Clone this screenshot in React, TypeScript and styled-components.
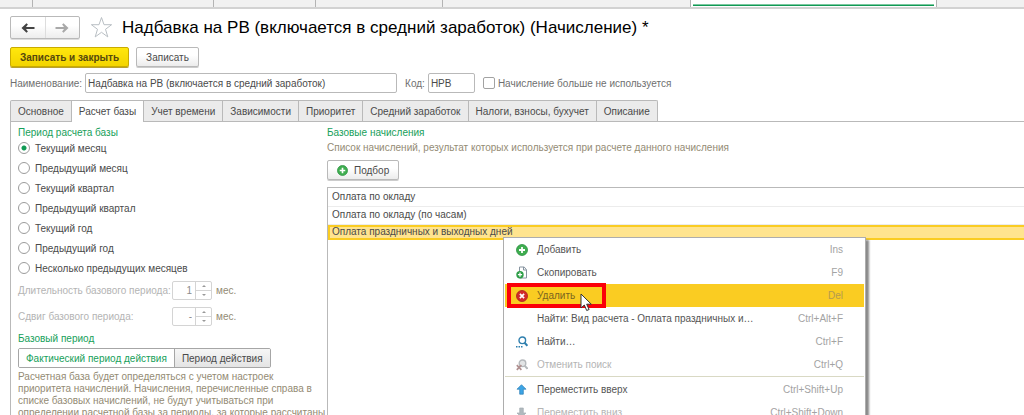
import React, { useState } from "react";
import styled, { createGlobalStyle, css } from "styled-components";

const color = {
  text: "#4a4a4a",
  muted: "#6f6f6f",
  hint: "#948b74",
  disabled: "#b4b4b4",
  green: "#16a05a",
  line: "#b9b9b9",
  yellow: "#facc22",
};

const GlobalStyle = createGlobalStyle`
  * { box-sizing: border-box; }
  body { margin: 0; background: #fff; overflow: hidden; }
  body, button, input { font-family: "Liberation Sans", Arial, sans-serif; font-size: 10px; color: ${color.text}; }
  button, input { margin: 0; }
`;

const Page = styled.div`
  display: flex;
  flex-direction: column;
  height: 100vh;
  overflow: hidden;
`;

const WindowTabs = styled.nav`
  display: flex;
  flex: none;
  height: 9px;
  background: #f1f1f1;
  border-bottom: 2px solid #d2d2d2;
`;

const WindowTab = styled.div<{ $grow: number; $active?: boolean }>`
  flex: ${(p) => p.$grow} 1 0;
  min-width: 0;
  border-right: 1px solid #b4b4b4;
  &:last-child { border-right: 0; }
  ${(p) => p.$active && "background: #fff;"}
`;

const ActiveMark = styled.div`
  height: 2px;
  margin: 4px 2px 0;
  border-top: 1px solid #7cc8a0;
  background: #109a54;
`;

const Form = styled.main`
  display: flex;
  flex: 1;
  flex-direction: column;
  min-height: 0;
  padding: 7px 0 0 10px;
`;

const TitleRow = styled.header`
  display: flex;
  align-items: center;
  height: 23px;
`;

const History = styled.div`
  display: flex;
  width: 70px;
  height: 23px;
  border: 1px solid ${color.line};
  border-radius: 2px;
  background: linear-gradient(#fff 40%, #ededed);
  box-shadow: 0 1px 0 #ddd;
`;

const HistoryButton = styled.button`
  display: grid;
  flex: 1;
  place-items: center;
  padding: 0;
  border: 0;
  background: none;
  & + & { border-left: 1px solid #ddd; }
`;

const StarButton = styled.button`
  display: grid;
  margin: 0 9px 0 10px;
  padding: 0;
  border: 0;
  background: none;
`;

const Title = styled.h1`
  margin: 0;
  color: #000;
  font-size: 17px;
  font-weight: normal;
  line-height: 22px;
  white-space: nowrap;
`;

const Commands = styled.div`
  display: flex;
  gap: 7px;
  margin-top: 8px;
`;

const Button = styled.button<{ $primary?: boolean }>`
  display: inline-flex;
  align-items: center;
  gap: 6px;
  height: 20px;
  padding: 0 9px;
  border: 1px solid ${color.line};
  border-radius: 2px;
  background: linear-gradient(#fff 40%, #ececec);
  box-shadow: 0 1px 0 #ccc;
  white-space: nowrap;
  ${(p) =>
    p.$primary &&
    css`
      border-color: #c9ab00;
      background: linear-gradient(#ffe70d, #f3d400);
      box-shadow: 0 1px 0 #b8a030;
      color: #55480d;
      font-weight: bold;
    `}
`;

const Fields = styled.div`
  display: flex;
  align-items: center;
  gap: 8px;
  margin-top: 6px;
  color: ${color.muted};
`;

const Field = styled.label`
  display: flex;
  align-items: center;
  gap: 3px;
  white-space: nowrap;
`;

const TextInput = styled.input<{ $width: number }>`
  width: ${(p) => p.$width}px;
  height: 20px;
  padding: 0 2px;
  border: 1px solid ${color.line};
  border-radius: 2px;
  background: #fff;
`;

const Checkbox = styled.input`
  width: 12px;
  height: 12px;
  border: 1px solid #a2a2a2;
  border-radius: 2px;
  background: #fff;
  appearance: none;
`;

const Tabs = styled.div`
  display: flex;
  flex: none;
  margin-top: 7px;
  border-bottom: 1px solid ${color.line};
`;

const Tab = styled.button<{ $active: boolean }>`
  height: 21px;
  padding: 0 7px;
  border: solid ${color.line};
  border-width: 1px 1px 0 0;
  background: #ebebeb;
  white-space: nowrap;
  &:first-child { border-left-width: 1px; border-top-left-radius: 2px; }
  &:last-child { border-top-right-radius: 2px; }
  ${(p) =>
    p.$active &&
    css`
      margin-bottom: -1px;
      height: 22px;
      background: #fff;
    `}
`;

const Panel = styled.section`
  display: flex;
  flex: 1;
  min-height: 0;
  padding: 5px 0 0 7px;
  border-left: 1px solid ${color.line};
`;

const Settings = styled.div`
  flex: none;
  width: 309px;
`;

const GroupTitle = styled.h2`
  margin: 0;
  color: ${color.green};
  font-size: 10px;
  font-weight: normal;
  line-height: 12px;
`;

const Periods = styled.div`
  margin-top: -1px;
`;

const RadioRow = styled.label`
  display: flex;
  align-items: center;
  gap: 5px;
  height: 20px;
`;

const Radio = styled.input`
  width: 12px;
  height: 12px;
  border: 1px solid #9c9c9c;
  border-radius: 50%;
  background: #fff;
  appearance: none;
  &:checked { background: radial-gradient(circle, #109a54 2px, #fff 3px); }
`;

const NumberRow = styled.div`
  display: flex;
  align-items: center;
  height: 26px;
  color: ${color.disabled};
`;

const NumberLabel = styled.label`
  width: 154px;
  white-space: nowrap;
`;

const Numbers = styled.div`
  margin-top: -1px;
`;

const Spinner = styled.div`
  display: flex;
  width: 40px;
  height: 19px;
  border: 1px solid #d4d4d4;
  border-radius: 2px;
`;

const NumberInput = styled.input`
  flex: 1;
  width: 0;
  padding: 0 3px;
  border: 0;
  background: none;
  color: #8c8c8c;
  text-align: right;
`;

const Steps = styled.div`
  display: flex;
  flex-direction: column;
  width: 16px;
  border-left: 1px solid #d4d4d4;
`;

const Step = styled.button`
  display: grid;
  flex: 1;
  place-items: center;
  padding: 0;
  border: 0;
  background: none;
  & + & { border-top: 1px solid #d4d4d4; }
`;

const Unit = styled.span`
  margin-left: 4px;
  color: ${color.hint};
`;

const BasePeriod = styled.div`
  margin-top: 4px;
`;

const Segments = styled.div`
  display: flex;
  width: fit-content;
  height: 20px;
  margin-top: 3px;
  border: 1px solid #a6a6a6;
  border-radius: 2px;
  overflow: hidden;
`;

const Segment = styled.button<{ $active: boolean }>`
  padding: 0 7px;
  border: 0;
  background: ${(p) => (p.$active ? "#fff" : "linear-gradient(#f6f6f6, #e4e4e4)")};
  color: ${(p) => (p.$active ? color.green : color.text)};
  white-space: nowrap;
  & + & { border-left: 1px solid #a6a6a6; }
`;

const Note = styled.p`
  margin: 3px -1px 0 0;
  color: ${color.hint};
  line-height: 12px;
`;

const Accruals = styled.div`
  display: flex;
  flex: 1;
  flex-direction: column;
  align-items: flex-start;
  min-width: 0;
`;

const Hint = styled.p`
  margin: 3px 0 6px;
  color: ${color.hint};
  line-height: 12px;
  white-space: nowrap;
`;

const ListArea = styled.div`
  position: relative;
  flex: 1;
  align-self: stretch;
  margin-top: 7px;
  border: solid ${color.line};
  border-width: 1px 0 0 1px;
`;

const List = styled.table`
  width: 100%;
  border-collapse: collapse;
`;

const Cell = styled.td<{ $selected: boolean }>`
  height: 18px;
  padding: 0 4px;
  border-bottom: 1px solid #ececec;
  line-height: 12px;
  ${(p) =>
    p.$selected &&
    css`
      height: 16px;
      border-bottom: 0;
      background: #ffe48f;
      box-shadow: inset 0 2px ${color.yellow}, inset 2px 0 ${color.yellow}, inset 0 -2px ${color.yellow};
    `}
`;

const Menu = styled.div`
  position: absolute;
  top: 49px;
  left: 175px;
  width: 363px;
  border: 1px solid #adadad;
  background: #fff;
  box-shadow: 3px 3px 2px #8a8a8a;
`;

const MenuItem = styled.button<{ $state?: "active" | "off" }>`
  display: grid;
  grid-template-columns: 18px 1fr auto;
  align-items: center;
  gap: 3px;
  width: 100%;
  height: 23px;
  padding: 0 21px 0 11px;
  border: 1px solid #fff;
  border-width: 0 1px;
  background: ${(p) => (p.$state === "active" ? color.yellow : "none")};
  color: ${(p) => (p.$state === "off" ? color.disabled : p.$state === "active" ? "#7a6420" : "#555")};
  text-align: left;
  white-space: nowrap;
`;

const MenuIcon = styled.span`
  display: grid;
  justify-content: start;
`;

const Shortcut = styled.kbd<{ $active: boolean }>`
  color: ${(p) => (p.$active ? "#b39a50" : "#a3a3a3")};
  font-family: inherit;
  font-size: 10px;
`;

const Separator = styled.hr`
  height: 1px;
  margin: 0 1px 1px;
  border: 0;
  background: #d9d9c4;
`;

const Highlight = styled.div`
  position: absolute;
  top: 45px;
  left: 3px;
  width: 99px;
  height: 25px;
  border: 4px solid #fb0009;
  pointer-events: none;
`;

const Pointer = styled.svg`
  position: absolute;
  top: 55px;
  left: 76px;
  pointer-events: none;
`;

const Arrow = ({ back }: { back?: boolean }) => (
  <svg width="14" height="10" viewBox="0 0 14 10" fill={back ? "#444" : "#a9a9a9"}>
    <path d={back ? "M.5 5L5.5.3 6.9 1.6 5 4H13.5v2H5l1.9 2.4-1.4 1.3z" : "M13.5 5L8.5.3 7.1 1.6 9 4H.5v2H9L7.1 8.4l1.4 1.3z"} />
  </svg>
);

const Star = () => (
  <svg width="23" height="23" viewBox="0 0 23 23" fill="#fff" stroke="#b9bfc4" strokeWidth="1">
    <path d="M11.5 1.5l2.5 7.2h7.6l-6.1 4.6 2.3 7.6-6.3-4.6-6.3 4.6 2.3-7.6-6.1-4.6H9z" />
  </svg>
);

const PlusIcon = ({ size = 12 }: { size?: number }) => (
  <svg width={size} height={size} viewBox="0 0 12 12">
    <circle cx="6" cy="6" r="5.5" fill="#3fae50" stroke="#2a9140" strokeWidth=".8" />
    <path d="M6 3v6M3 6h6" stroke="#fff" strokeWidth="1.8" />
  </svg>
);

const CopyIcon = () => (
  <svg width="12" height="13" viewBox="0 0 12 13">
    <path d="M3.5 1h4.7l2.3 2.8V12H3.5z" fill="#fff" stroke="#8794a0" />
    <path d="M7.5 1v3h3" fill="none" stroke="#8794a0" />
    <circle cx="4" cy="8.7" r="3.7" fill="#2e9e48" />
    <path d="M4 6.6v4.2M1.9 8.7h4.2" stroke="#fff" strokeWidth="1.3" />
  </svg>
);

const DeleteIcon = () => (
  <svg width="12" height="12" viewBox="0 0 12 12">
    <circle cx="6" cy="6" r="5.5" fill="#d22b2b" stroke="#aa2020" strokeWidth=".8" />
    <path d="M3.9 3.9l4.2 4.2M8.1 3.9L3.9 8.1" stroke="#fff" strokeWidth="1.7" />
  </svg>
);

const FindIcon = () => (
  <svg width="12" height="12" viewBox="0 0 12 12" fill="none" stroke="#2f7fae">
    <circle cx="6.3" cy="4.3" r="3.3" strokeWidth="1.4" />
    <path d="M8.6 6.8l2.8 3" strokeWidth="2" />
    <path d="M0 10.8h7" strokeWidth="1.5" strokeDasharray="1.5 1" />
  </svg>
);

const CancelFindIcon = () => (
  <svg width="12" height="12" viewBox="0 0 12 12" fill="none" stroke="#b5b9bc">
    <circle cx="6.5" cy="4.3" r="3.3" fill="#e2e4e5" strokeWidth="1.4" />
    <path d="M8.8 6.8l2.7 3" strokeWidth="2" />
    <path d="M.8 6.2l4.6 4.6M5.4 6.2L.8 10.8" stroke="#b09090" strokeWidth="1.7" />
  </svg>
);

const MoveIcon = ({ down }: { down?: boolean }) => (
  <svg width="11" height="11" viewBox="0 0 11 11">
    <path
      d={down ? "M5.5 10.5L1 6h2.7V1h3.6v5H10z" : "M5.5.7L10 5.2H7.3v5H3.7v-5H1z"}
      fill={down ? "#b0b9be" : "#3da5e6"}
      stroke={down ? "#a5aeb3" : "#2a7db4"}
      strokeWidth=".7"
    />
  </svg>
);

const StepMark = ({ down }: { down?: boolean }) => (
  <svg width="4" height="2" viewBox="0 0 4 2" fill="#999">
    <path d={down ? "M0 0h4L2 2z" : "M0 2h4L2 0z"} />
  </svg>
);

type Item = { label: string; keys: string; icon?: React.ReactNode; state?: "active" | "off" };

const editItems: Item[] = [
  { label: "Добавить", keys: "Ins", icon: <PlusIcon /> },
  { label: "Скопировать", keys: "F9", icon: <CopyIcon /> },
  { label: "Удалить", keys: "Del", icon: <DeleteIcon />, state: "active" },
  { label: "Найти: Вид расчета - Оплата праздничных и…", keys: "Ctrl+Alt+F" },
  { label: "Найти…", keys: "Ctrl+F", icon: <FindIcon /> },
  { label: "Отменить поиск", keys: "Ctrl+Q", icon: <CancelFindIcon />, state: "off" },
];

const moveItems: Item[] = [
  { label: "Переместить вверх", keys: "Ctrl+Shift+Up", icon: <MoveIcon /> },
  { label: "Переместить вниз", keys: "Ctrl+Shift+Down", icon: <MoveIcon down />, state: "off" },
];

const windowTabs = [32, 181, 102, 126, 248, 247, 87];
const tabs = ["Основное", "Расчет базы", "Учет времени", "Зависимости", "Приоритет", "Средний заработок", "Налоги, взносы, бухучет", "Описание"];
const periods = ["Текущий месяц", "Предыдущий месяц", "Текущий квартал", "Предыдущий квартал", "Текущий год", "Предыдущий год", "Несколько предыдущих месяцев"];
const rows = ["Оплата по окладу", "Оплата по окладу (по часам)", "Оплата праздничных и выходных дней"];
const segments = ["Фактический период действия", "Период действия"];

const MenuItems = ({ items }: { items: Item[] }) => (
  <>
    {items.map((item) => (
      <MenuItem key={item.label} type="button" role="menuitem" $state={item.state} disabled={item.state === "off"}>
        <MenuIcon>{item.icon}</MenuIcon>
        <span>{item.label}</span>
        <Shortcut $active={item.state === "active"}>{item.keys}</Shortcut>
      </MenuItem>
    ))}
  </>
);

const NumberField = ({ id, label, value }: { id: string; label: string; value: string }) => (
  <NumberRow>
    <NumberLabel htmlFor={id}>{label}</NumberLabel>
    <Spinner>
      <NumberInput id={id} defaultValue={value} disabled />
      <Steps>
        <Step type="button" disabled aria-label="Увеличить"><StepMark /></Step>
        <Step type="button" disabled aria-label="Уменьшить"><StepMark down /></Step>
      </Steps>
    </Spinner>
    <Unit>мес.</Unit>
  </NumberRow>
);

export default function App() {
  const [tab, setTab] = useState(1);
  const [period, setPeriod] = useState(0);
  const [segment, setSegment] = useState(0);

  return (
    <Page>
      <GlobalStyle />
      <WindowTabs>
        {windowTabs.map((grow, i) => (
          <WindowTab key={i} $grow={grow} $active={i === 5}>
            {i === 5 && <ActiveMark />}
          </WindowTab>
        ))}
      </WindowTabs>
      <Form>
        <TitleRow>
          <History>
            <HistoryButton type="button" aria-label="Назад"><Arrow back /></HistoryButton>
            <HistoryButton type="button" aria-label="Вперед"><Arrow /></HistoryButton>
          </History>
          <StarButton type="button" aria-label="В избранное"><Star /></StarButton>
          <Title>Надбавка на РВ (включается в средний заработок) (Начисление) *</Title>
        </TitleRow>
        <Commands>
          <Button type="button" $primary>Записать и закрыть</Button>
          <Button type="button">Записать</Button>
        </Commands>
        <Fields>
          <Field>
            Наименование:
            <TextInput $width={312} defaultValue="Надбавка на РВ (включается в средний заработок)" />
          </Field>
          <Field>
            Код:
            <TextInput $width={47} defaultValue="НРВ" />
          </Field>
          <Field>
            <Checkbox type="checkbox" />
            Начисление больше не используется
          </Field>
        </Fields>
        <Tabs role="tablist">
          {tabs.map((label, i) => (
            <Tab key={label} type="button" role="tab" aria-selected={tab === i} $active={tab === i} onClick={() => setTab(i)}>
              {label}
            </Tab>
          ))}
        </Tabs>
        <Panel>
          <Settings>
            <GroupTitle>Период расчета базы</GroupTitle>
            <Periods>
              {periods.map((label, i) => (
                <RadioRow key={label}>
                  <Radio type="radio" name="period" checked={period === i} onChange={() => setPeriod(i)} />
                  {label}
                </RadioRow>
              ))}
            </Periods>
            <Numbers>
              <NumberField id="duration" label="Длительность базового периода:" value="1" />
              <NumberField id="shift" label="Сдвиг базового периода:" value="-" />
            </Numbers>
            <BasePeriod>
              <GroupTitle>Базовый период</GroupTitle>
              <Segments>
                {segments.map((label, i) => (
                  <Segment key={label} type="button" $active={segment === i} onClick={() => setSegment(i)}>
                    {label}
                  </Segment>
                ))}
              </Segments>
            </BasePeriod>
            <Note>
              Расчетная база будет определяться с учетом настроек приоритета начислений. Начисления, перечисленные
              справа в списке базовых начислений, не будут учитываться при определении расчетной базы за периоды, за
              которые рассчитаны
            </Note>
          </Settings>
          <Accruals>
            <GroupTitle>Базовые начисления</GroupTitle>
            <Hint>Список начислений, результат которых используется при расчете данного начисления</Hint>
            <Button type="button"><PlusIcon size={11} />Подбор</Button>
            <ListArea>
              <List>
                <tbody>
                  {rows.map((label, i) => (
                    <tr key={label}>
                      <Cell $selected={i === 2}>{label}</Cell>
                    </tr>
                  ))}
                </tbody>
              </List>
              <Menu role="menu">
                <MenuItems items={editItems} />
                <Separator />
                <MenuItems items={moveItems} />
                <Highlight />
                <Pointer width="12" height="19" viewBox="0 0 12 19">
                  <path d="M1 1v14l3.3-3 2.4 5.5 2.4-1-2.4-5.3h4.6z" fill="#fff" stroke="#333" />
                </Pointer>
              </Menu>
            </ListArea>
          </Accruals>
        </Panel>
      </Form>
    </Page>
  );
}
